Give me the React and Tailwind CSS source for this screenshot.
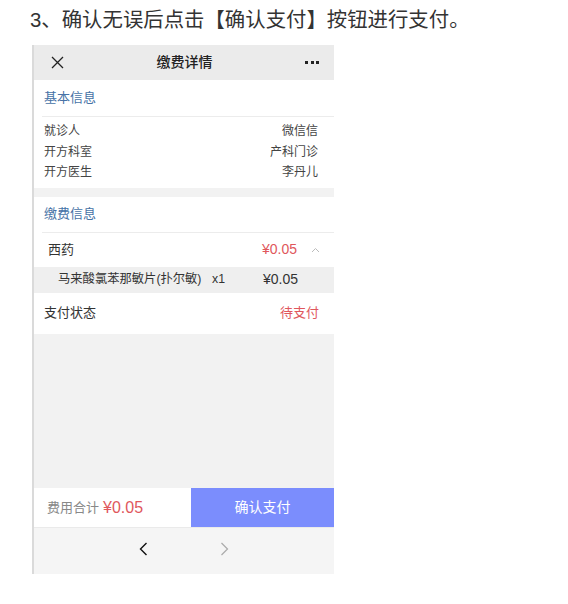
import React from 'react';

const font = 'font-["Liberation_Sans","Noto_Sans_CJK_SC",sans-serif]';

function InfoRow({ label, value }) {
    return (
        <div className="flex items-center justify-between h-[20.5px] text-[12px] text-[#444]">
            <span>{label}</span>
            <span>{value}</span>
        </div>
    );
}

export default function App() {
    return (
        <div className={`w-[568px] h-[604px] bg-white ${font}`}>
            <div className="h-[45px] pl-[30px] pt-[6px] text-[20.4px] leading-[28px] text-[#333]">3、确认无误后点击【确认支付】按钮进行支付。</div>

            <div className="ml-[32px] w-[302px] h-[529px] flex flex-col border-l-2 border-[#dadada] bg-white">
                {/* header */}
                <div className="h-[35px] shrink-0 bg-[#ebebeb] flex items-center justify-between px-[16px]">
                    <svg width="13" height="13" viewBox="0 0 13 13" className="ml-[1px]">
                        <path d="M1 1 L12 12 M12 1 L1 12" stroke="#222" strokeWidth="1.3" fill="none" />
                    </svg>
                    <span className="text-[14px] font-medium text-[#222]">缴费详情</span>
                    <div className="flex gap-[2.5px] mr-[-1px]">
                        <span className="w-[3px] h-[3px] bg-[#222]" />
                        <span className="w-[3px] h-[3px] bg-[#222]" />
                        <span className="w-[3px] h-[3px] bg-[#222]" />
                    </div>
                </div>

                {/* 基本信息 */}
                <div className="h-[36px] shrink-0 flex items-center pl-[10px] text-[13px] text-[#4672a6]">基本信息</div>
                <div className="ml-[8px] h-px bg-[#ececec] shrink-0" />
                <div className="pl-[10px] pr-[16px] pt-[4px] pb-[5px] shrink-0">
                    <InfoRow label="就诊人" value="微信信" />
                    <InfoRow label="开方科室" value="产科门诊" />
                    <InfoRow label="开方医生" value="李丹儿" />
                </div>
                <div className="h-[9px] shrink-0 bg-[#f2f2f2]" />

                {/* 缴费信息 */}
                <div className="h-[35px] shrink-0 flex items-center pl-[10px] text-[13px] text-[#4672a6]">缴费信息</div>
                <div className="ml-[8px] h-px bg-[#ececec] shrink-0" />
                <div className="h-[34px] shrink-0 flex items-center pl-[14px] pr-[14px] text-[13px] text-[#333]">
                    <span className="flex-1">西药</span>
                    <span className="text-[14px] text-[#e0575c] mr-[14px]">¥0.05</span>
                    <svg width="9" height="6" viewBox="0 0 9 6">
                        <path d="M1 5 L4.5 1.5 L8 5" stroke="#bbb" strokeWidth="1" fill="none" />
                    </svg>
                </div>
                <div className="h-[26px] shrink-0 flex items-center bg-[#efefef] pl-[24px] text-[12.3px] text-[#333]">
                    <span className="w-[154px]">马来酸氯苯那敏片(扑尔敏)</span>
                    <span className="w-[51px]">x1</span>
                    <span className="text-[14px]">¥0.05</span>
                </div>
                <div className="h-[41px] shrink-0 flex items-center justify-between pl-[10px] pr-[15px] text-[13px]">
                    <span className="text-[#333]">支付状态</span>
                    <span className="text-[#e0575c]">待支付</span>
                </div>

                {/* empty area */}
                <div className="flex-1 bg-[#f2f2f2]" />

                {/* bottom bar */}
                <div className="h-[40px] shrink-0 flex border-b border-[#eaeaea]">
                    <div className="w-[157px] flex items-center pl-[13px] text-[13px] text-[#888]">
                        费用合计
                        <span className="ml-[4px] text-[16px] text-[#e0575c]">¥0.05</span>
                    </div>
                    <div className="flex-1 bg-[#7b8dfd] flex items-center justify-center text-[14px] text-white">确认支付</div>
                </div>

                {/* nav */}
                <div className="h-[46px] shrink-0 bg-[#f5f5f5] flex items-start pt-[14px]">
                    <svg width="9" height="14" viewBox="0 0 9 14" className="ml-[105px]">
                        <path d="M7.5 1 L1.5 7 L7.5 13" stroke="#111" strokeWidth="1.4" fill="none" />
                    </svg>
                    <svg width="9" height="14" viewBox="0 0 9 14" className="ml-[72px]">
                        <path d="M1.5 1 L7.5 7 L1.5 13" stroke="#aaa" strokeWidth="1.2" fill="none" />
                    </svg>
                </div>
            </div>
        </div>
    );
}
